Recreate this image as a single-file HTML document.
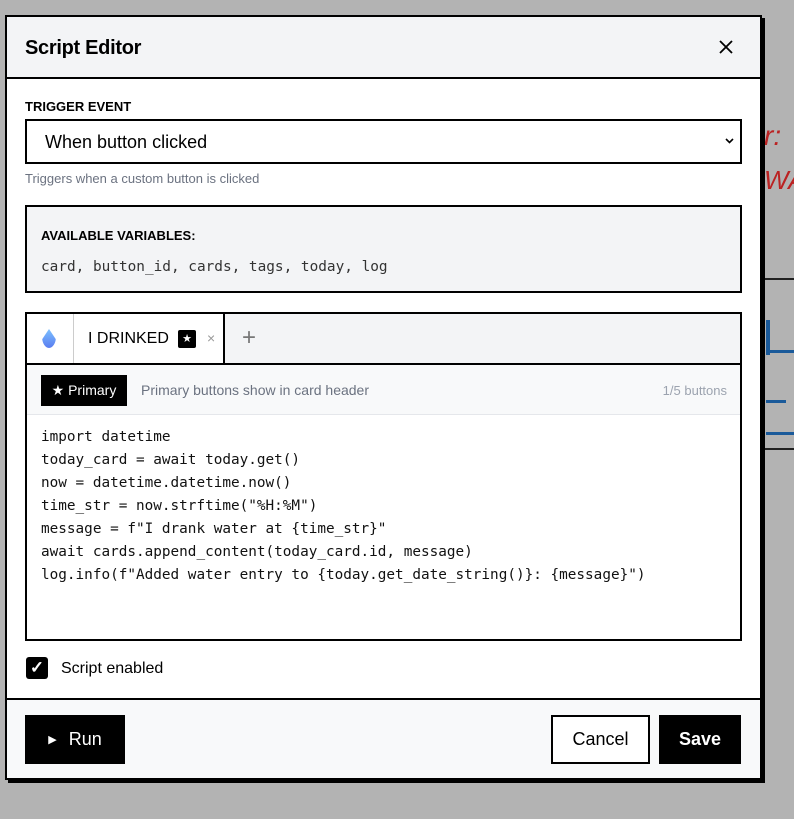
<!DOCTYPE html>
<html><head><meta charset="utf-8"><style>
*{box-sizing:border-box;margin:0;padding:0}
body{width:794px;height:819px;background:#b3b3b3;position:relative;overflow:hidden;font-family:"Liberation Sans",sans-serif;color:#000}
.modal{position:absolute;left:5px;top:15px;width:757px;height:765px;background:#fff;border:2px solid #000;box-shadow:3px 3px 0 #000}
.hdr{position:absolute;left:0;top:0;right:0;height:62px;background:#f3f4f6;border-bottom:2px solid #000}
.hdr h1{position:absolute;left:18px;top:20px;font-size:20px;font-weight:600;letter-spacing:-0.3px}
.abs{position:absolute}
.mono{font-family:"DejaVu Sans Mono","Liberation Mono",monospace}
.ftr{position:absolute;left:0;right:0;top:681px;bottom:0;background:#f8f9fa;border-top:2px solid #000}
.btn{position:absolute;height:49px;font-size:18px;display:flex;align-items:center;justify-content:center}
</style></head><body>
<div class="abs" style="left:764px;top:120px;color:#b22;font-size:28px;font-style:italic">r:</div>
<div class="abs" style="left:764px;top:165px;color:#b22;font-size:26px;font-style:italic">WA</div>
<div class="abs" style="left:762px;top:278px;width:32px;height:2px;background:#222"></div>
<div class="abs" style="left:762px;top:448px;width:32px;height:2px;background:#222"></div>
<div class="abs" style="left:766px;top:320px;width:4px;height:35px;background:#1a5a9a"></div>
<div class="abs" style="left:766px;top:350px;width:28px;height:3px;background:#1a5a9a"></div>
<div class="abs" style="left:766px;top:400px;width:20px;height:3px;background:#1a5a9a"></div>
<div class="abs" style="left:766px;top:432px;width:28px;height:3px;background:#1a5a9a"></div>
<div class="modal">
 <div class="hdr"><h1>Script Editor</h1>
  <svg class="abs" style="left:712px;top:23px" width="14" height="14" viewBox="0 0 14 14"><path d="M1 1L13 13M13 1L1 13" stroke="#000" stroke-width="1.8"/></svg></div>
 <div class="abs" style="left:18px;top:82px;font-size:13px;font-weight:bold">TRIGGER EVENT</div>
 <div class="abs" style="left:18px;top:102px;width:717px;height:45px;border:2px solid #000;font-size:18px;padding:11px 0 0 18px">When button clicked
  <svg class="abs" style="right:6px;top:17px" width="9" height="6" viewBox="0 0 9 6"><path d="M1 1L4.5 4.5L8 1" stroke="#000" stroke-width="1.6" fill="none"/></svg></div>
 <div class="abs" style="left:18px;top:154px;font-size:13px;color:#6b7280">Triggers when a custom button is clicked</div>
 <div class="abs" style="left:18px;top:188px;width:717px;height:88px;border:2px solid #000;background:#f3f4f6">
  <div class="abs" style="left:14px;top:21px;font-size:13px;font-weight:bold">AVAILABLE VARIABLES:</div>
  <div class="abs mono" style="left:14px;top:52px;font-size:14.4px;color:#333">card, button_id, cards, tags, today, log</div>
 </div>
 <div class="abs" style="left:18px;top:295px;width:717px;height:329px;border:2px solid #000">
  <div class="abs" style="left:0;top:0;right:0;height:51px;background:#f3f4f6;border-bottom:2px solid #000"></div>
  <div class="abs" style="left:0;top:0;width:198px;height:51px;background:#fff;border-right:2px solid #000;border-bottom:2px solid #000"></div>
  <div class="abs" style="left:46px;top:0;width:1px;height:49px;background:#ccc"></div>
  <div class="abs" style="left:15px;top:15px;width:14px;height:19px;background:linear-gradient(#7cc0ff,#5a7df0);border-radius:50% 50% 50% 50%/40% 40% 60% 60%;clip-path:polygon(50% 0,100% 55%,100% 100%,0 100%,0 55%)"></div>
  <div class="abs" style="left:61px;top:16px;font-size:16px">I DRINKED</div>
  <div class="abs" style="left:151px;top:16px;width:18px;height:18px;background:#000;color:#fff;font-size:11px;text-align:center;line-height:18px;border-radius:2px">★</div>
  <div class="abs" style="left:180px;top:16px;color:#999;font-size:14px">×</div>
  <div class="abs" style="left:215px;top:10px;color:#777;font-size:24px">+</div>
  <div class="abs" style="left:0;top:51px;right:0;height:50px;background:#f8f9fa;border-bottom:1px solid #e5e7eb"></div>
  <div class="abs" style="left:14px;top:61px;width:86px;height:31px;background:#000;color:#fff;font-size:14px;line-height:31px;text-align:center">★ Primary</div>
  <div class="abs" style="left:114px;top:68px;font-size:14px;color:#6b7280">Primary buttons show in card header</div>
  <div class="abs" style="right:13px;top:69px;font-size:13px;color:#9ca3af">1/5 buttons</div>
  <pre class="abs mono" style="left:14px;top:112px;font-size:14.35px;line-height:23px;color:#111">import datetime
today_card = await today.get()
now = datetime.datetime.now()
time_str = now.strftime("%H:%M")
message = f"I drank water at {time_str}"
await cards.append_content(today_card.id, message)
log.info(f"Added water entry to {today.get_date_string()}: {message}")</pre>
 </div>
 <div class="abs" style="left:19px;top:640px;width:22px;height:22px;background:#000;border-radius:3px;color:#fff;font-size:17px;text-align:center;line-height:22px;font-weight:bold">✓</div>
 <div class="abs" style="left:54px;top:643px;font-size:16px">Script enabled</div>
 <div class="ftr">
  <div class="btn" style="left:18px;top:15px;width:100px;background:#000;color:#fff"><span style="font-size:11px;margin-right:12px">▶</span>Run</div>
  <div class="btn" style="left:544px;top:15px;width:99px;border:2px solid #000;background:#fff">Cancel</div>
  <div class="btn" style="left:652px;top:15px;width:82px;background:#000;color:#fff;font-weight:bold">Save</div>
 </div>
</div>
</body></html>
